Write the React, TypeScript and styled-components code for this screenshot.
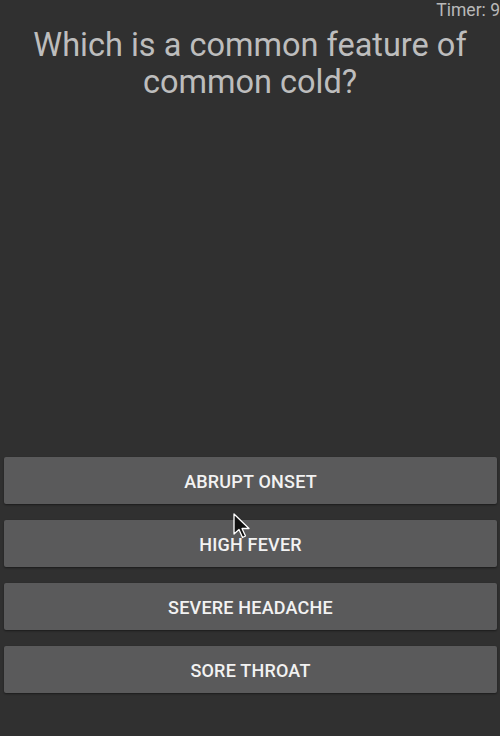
import React from "react";
import styled, { createGlobalStyle } from "styled-components";

const Global = createGlobalStyle`
  html, body { margin: 0; padding: 0; background: #303030; }
  body { font-family: Roboto, "Noto Sans", sans-serif; }
  #root { width: 500px; height: 736px; }
`;

const Screen = styled.div`
  position: relative;
  width: 500px;
  height: 736px;
  background: #303030;
  display: flex;
  flex-direction: column;
  overflow: hidden;
`;

const TopBar = styled.div`
  display: flex;
  justify-content: flex-end;
  height: 20px;
`;

const Timer = styled.span`
  font-size: 17.5px;
  line-height: 20px;
  color: #b9b9b9;
  white-space: nowrap;
`;

const Question = styled.h1`
  margin: 7px 0 0;
  padding: 0 16px;
  font-family: Roboto, sans-serif;
  font-weight: 400;
  font-size: 32.5px;
  line-height: 37px;
  color: #bdbdbd;
  text-align: center;
`;

const Spacer = styled.div`
  flex: 1;
`;

const Answers = styled.div`
  display: flex;
  flex-direction: column;
  gap: 16px;
  padding: 0 3px 43px 4px;
`;

const AnswerButton = styled.button`
  height: 47px;
  padding: 2px 0 0;
  border: none;
  border-radius: 2px;
  background: #5a5a5b;
  color: #f2f2f2;
  font-family: Roboto, sans-serif;
  font-weight: 500;
  font-size: 18px;
  letter-spacing: 0.2px;
  text-transform: uppercase;
  box-shadow: 0 1px 2px rgba(0, 0, 0, 0.45);
  cursor: pointer;
`;

const Pointer = styled.svg`
  position: absolute;
  left: 232px;
  top: 513px;
  pointer-events: none;
`;

const answers = ["Abrupt onset", "High fever", "Severe headache", "Sore throat"];

export default function App() {
  return (
    <>
      <Global />
      <Screen>
        <TopBar>
          <Timer>Timer: 9</Timer>
        </TopBar>
        <Question>Which is a common feature of common cold?</Question>
        <Spacer />
        <Answers>
          {answers.map((a) => (
            <AnswerButton key={a}>{a}</AnswerButton>
          ))}
        </Answers>
        <Pointer width="20" height="28" viewBox="0 0 20 28">
          <path
            d="M2 1 L2 21 L7 16.5 L10.5 24.5 L13.5 23 L10 15.5 L17 15.5 Z"
            fill="#111"
            stroke="#fff"
            strokeWidth="1.3"
            strokeLinejoin="round"
          />
        </Pointer>
      </Screen>
    </>
  );
}
